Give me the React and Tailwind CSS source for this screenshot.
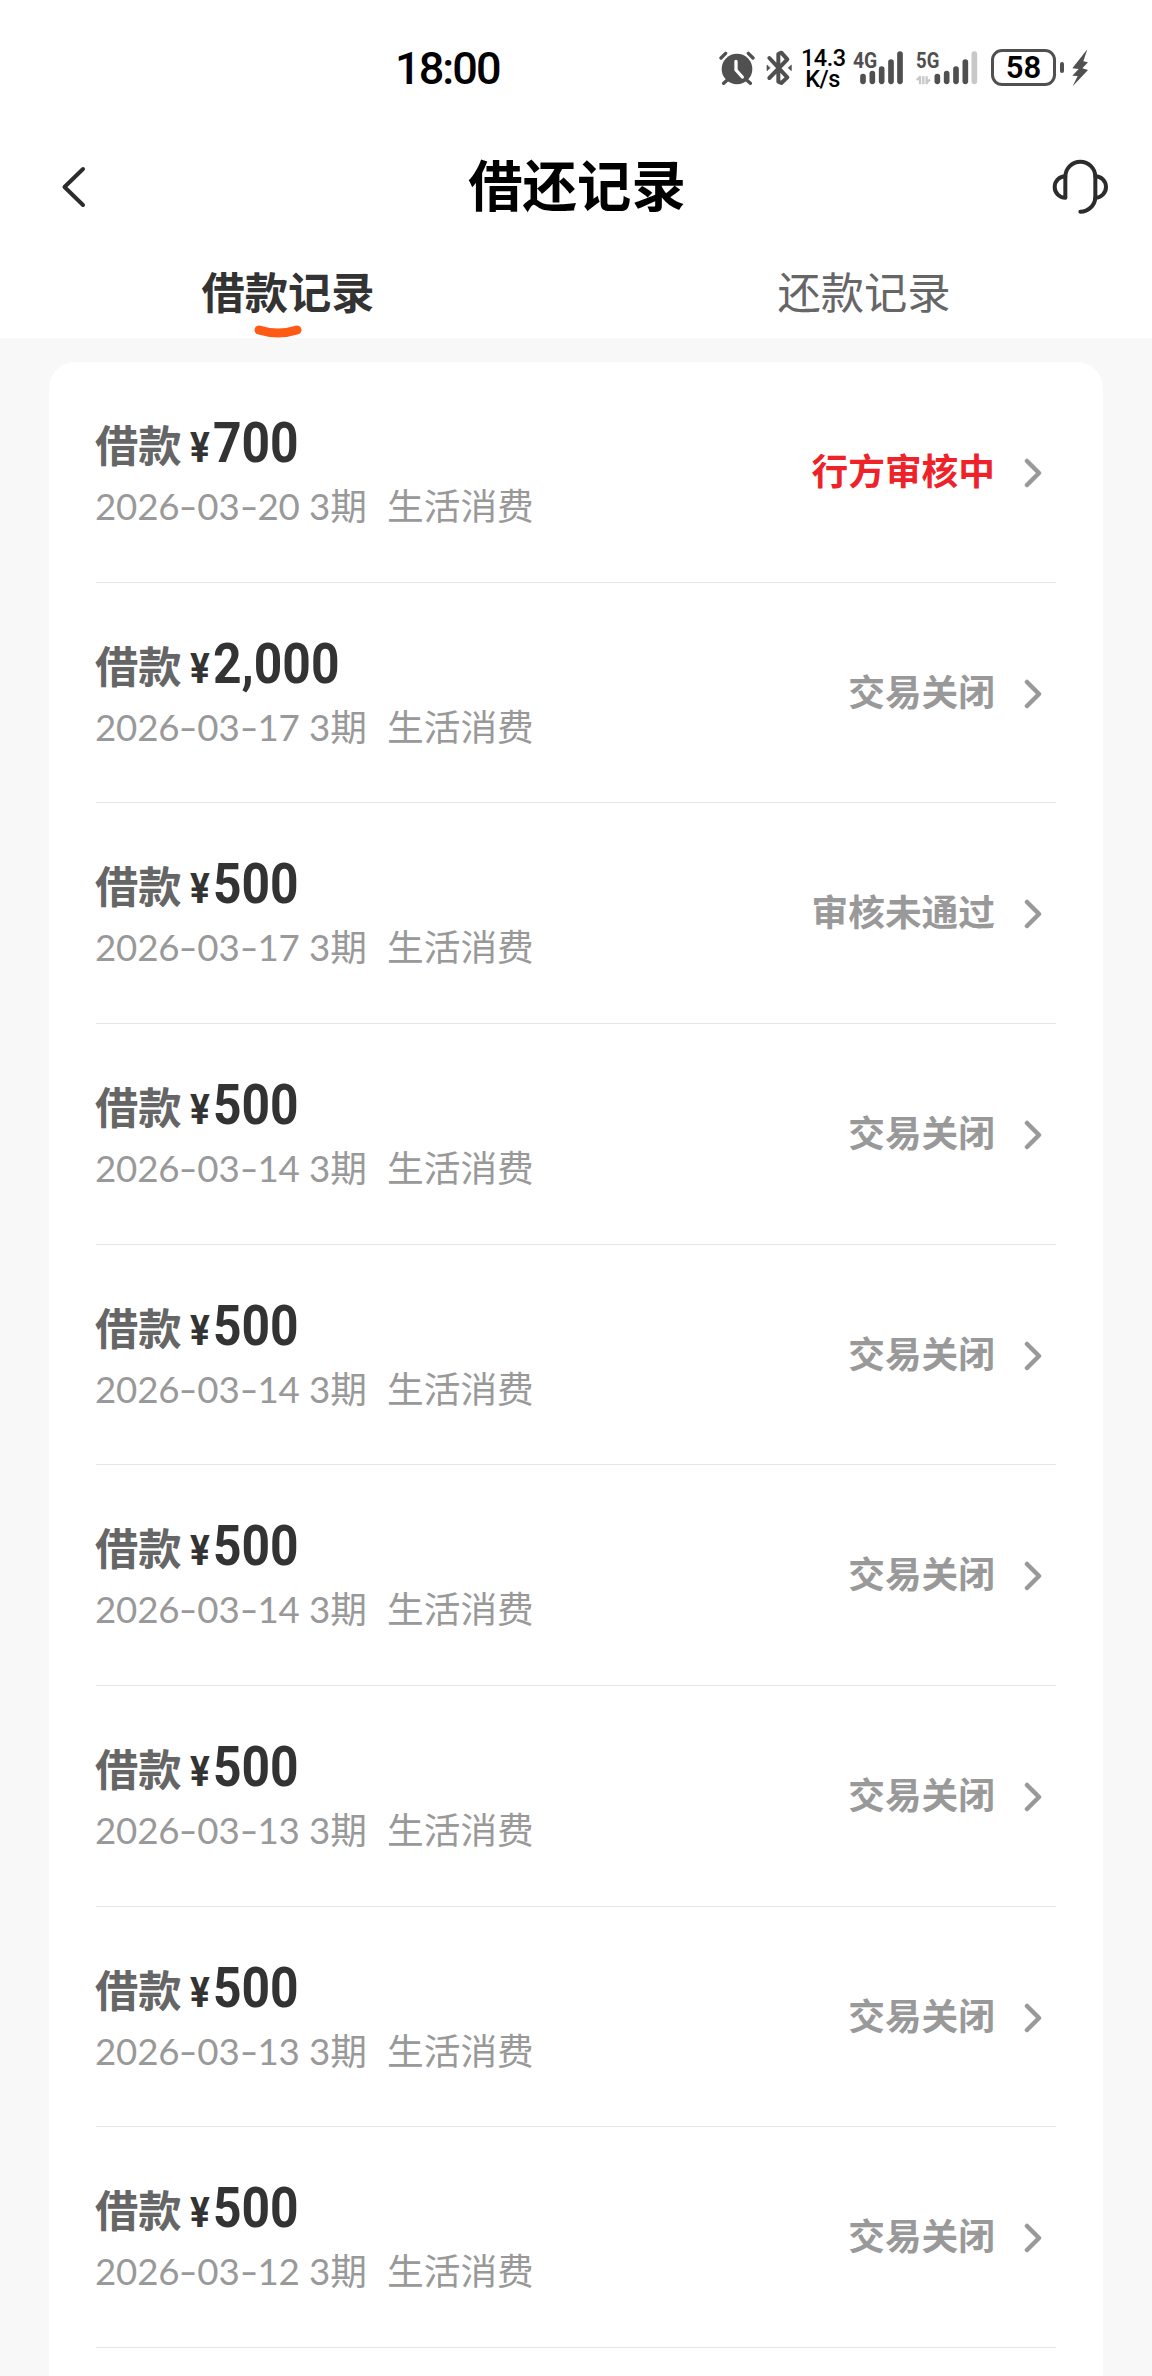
const records = [
  { amount: "700", date: "2026-03-20", status: "行方审核中", active: true },
  { amount: "2,000", date: "2026-03-17", status: "交易关闭" },
  { amount: "500", date: "2026-03-17", status: "审核未通过" },
  { amount: "500", date: "2026-03-14", status: "交易关闭" },
  { amount: "500", date: "2026-03-14", status: "交易关闭" },
  { amount: "500", date: "2026-03-14", status: "交易关闭" },
  { amount: "500", date: "2026-03-13", status: "交易关闭" },
  { amount: "500", date: "2026-03-13", status: "交易关闭" },
  { amount: "500", date: "2026-03-12", status: "交易关闭" },
];

const AlarmIcon = () => (
  <svg className="h-9 w-9 shrink-0" viewBox="0 0 108 108" fill="none" stroke="#505050" strokeLinecap="round">
    <circle cx="54" cy="57" r="46" fill="#505050" stroke="none" />
    <path d="M6 24 20 10M102 24 88 10M14 100l10-9M94 100l-10-9" strokeWidth="10" />
    <path d="M51 34v26l19 21" stroke="#fff" strokeWidth="10" strokeLinejoin="round" />
  </svg>
);

const BluetoothIcon = () => (
  <svg className="h-9 w-[26px] shrink-0" viewBox="0 0 78 108" fill="none" stroke="#505050" strokeWidth="12" strokeLinejoin="round" strokeLinecap="round">
    <path d="M10 24 64 82 46 99 37 95V66M10 84 64 28 46 8 37 12V44" />
    <path d="M3 46v16l9-8zM76 46v16l-9-8z" fill="#505050" strokeWidth="2" />
  </svg>
);

const SignalIcon = ({ label, weak }) => (
  <svg className={weak ? "ml-[12px] h-9 w-[63px] shrink-0 overflow-visible" : "ml-[9px] h-9 w-[51px] shrink-0 overflow-visible"} viewBox={weak ? "0 0 189 108" : "0 0 153 108"}>
    <text x="0" y="55" fontSize="64" fontWeight="700" fill="#505050" textLength={weak ? 70 : 73} lengthAdjust="spacingAndGlyphs">
      {label}
    </text>
    {weak && (
      <path d="M2 90 14 79M12 79v24M22 79v24M32 79v24M32 97 42 89" stroke="#c8c8c8" strokeWidth="7" fill="none" />
    )}
    <g strokeWidth="17" strokeLinecap="round" stroke="#505050" transform={weak ? "translate(34 0)" : ""}>
      <path d="M30 80V94" />
      <path d="M58 71V94" />
      <path d="M86 57V94" />
      <path d="M114 36V94" />
      <path d="M141 12V94" stroke={weak ? "#c8c8c8" : "#505050"} />
    </g>
  </svg>
);

const StatusBar = () => (
  <div className="flex h-[135px] items-center justify-between pr-[64px] pl-[395px] font-[Roboto,sans-serif]">
    <span className="mt-[2px] text-[45px] font-medium tracking-[-1.9px] text-black">18:00</span>
    <div className="flex items-center">
      <AlarmIcon />
      <div className="w-[11px]" />
      <BluetoothIcon />
      <div className="mt-[2px] ml-[9px] w-[43px] text-center text-[23.500px] leading-[21px] font-medium tracking-[-0.5px] text-black">
        <div>14.3</div>
        <div>K/s</div>
      </div>
      <SignalIcon label="4G" />
      <SignalIcon label="5G" weak />
      <div className="ml-[12px] flex h-[37px] w-[65px] items-center justify-center rounded-[11px] border-[3px] border-[#505050] pt-[2px] text-[31px] font-semibold text-black">
        58
      </div>
      <div className="ml-[4px] h-[11px] w-1 rounded-sm bg-[#505050]" />
      <svg className="ml-[8px] h-[38px] w-4" viewBox="0 0 48 114" fill="#505050">
        <path d="M46 1 1 58 20 60 1 80 17 81 2 112 48 63 31 58 48 40 34 37Z" />
      </svg>
    </div>
  </div>
);

const Header = () => (
  <div className="flex h-[103px] items-center justify-between pr-[44px] pl-[60px]">
    <svg className="h-[44px] w-[52px]" viewBox="0 0 52 44" fill="none" stroke="#2c2c2c" strokeWidth="4" strokeLinecap="round" strokeLinejoin="round">
      <path d="M23 4 4.500 22 23 40" />
    </svg>
    <h1 className="mr-[10px] pb-[6px] text-[54.400px] leading-none font-bold text-black">借还记录</h1>
    <svg className="h-14 w-14" viewBox="0 0 168 168" fill="none" stroke="#2c2c2c" strokeWidth="12" strokeLinecap="round">
      <path d="M40 115V53a45 45 0 0 1 90 0v62a45 45 0 0 1-45 43" />
      <path d="M40 52a32 32 0 0 0 0 64M130 52a32 32 0 0 1 0 64" />
    </svg>
  </div>
);

const Tabs = () => (
  <div className="grid h-[100px] grid-cols-2 text-center text-[43.300px] leading-[105px]">
    <div className="relative h-[100px] font-bold text-[#333]">
      借款记录
      <svg className="absolute bottom-0 left-[254px] h-[14px] w-12" viewBox="0 0 48 14" fill="none">
        <path d="M5 6Q24 12 43 6" stroke="#ff5a13" strokeWidth="9" strokeLinecap="round" />
      </svg>
    </div>
    <div className="h-[100px] text-[#666]">还款记录</div>
  </div>
);

// Lato's hyphen is short, so each one gets a fixed, stretched cell
const RecordDate = ({ date }) => (
  <span className="w-[214px] font-[Lato,sans-serif] tracking-[-0.2px]">
    {date.split("-").map((part, i) => (
      <span key={i}>
        {i > 0 && <span className="inline-block w-[18px] scale-x-[1.4] text-center">-</span>}
        {part}
      </span>
    ))}
  </span>
);

const RecordRow = ({ record }) => (
  <div className="flex h-[220.670px] justify-between border-b border-[#e6e6e6]">
    <div className="-ml-px pt-[51px]">
      <div className="flex h-[60px] items-baseline leading-[60px]">
        <span className="w-[95px] text-[43.300px] font-bold text-[#666]">借款</span>
        <span className="w-[23px] origin-left scale-x-[.88] font-[Roboto,sans-serif] text-[42px] font-bold text-[#333]">¥</span>
        <span className="origin-left scale-x-[.905] font-[Roboto,sans-serif] text-[55px] font-bold text-[#333]">{record.amount}</span>
      </div>
      <div className="mt-[4px] flex h-[54px] items-baseline text-[36.700px] leading-[54px] text-[#999]">
        <RecordDate date={record.date} />
        <span className="w-[78px] font-[Lato,'Noto_Sans_CJK_SC',sans-serif]">3期</span>
        <span>生活消费</span>
      </div>
    </div>
    <div className="flex h-[218px] items-center pr-[14px]">
      <span className={`pb-[3px] text-[36.700px] font-bold ${record.active ? "text-[#ee2228]" : "text-[#999]"}`}>{record.status}</span>
      <svg className="mt-1 ml-[29px] h-[32px] w-[18px]" viewBox="0 0 18 32" fill="none" stroke="#999" strokeWidth="4.500" strokeLinecap="round" strokeLinejoin="round">
        <path d="M3 4 15 16 3 28" />
      </svg>
    </div>
  </div>
);

export default function App() {
  return (
    <div className="h-[2376px] w-[1152px] overflow-hidden bg-[#f8f8f8] font-['Noto_Sans_CJK_SC',sans-serif]">
      <div className="bg-white">
        <StatusBar />
        <Header />
        <Tabs />
      </div>
      <div className="mx-[49px] mt-[24px] h-[2100px] rounded-t-[26px] bg-white px-[47px]">
        {records.map((record, i) => (
          <RecordRow key={i} record={record} />
        ))}
      </div>
    </div>
  );
}
